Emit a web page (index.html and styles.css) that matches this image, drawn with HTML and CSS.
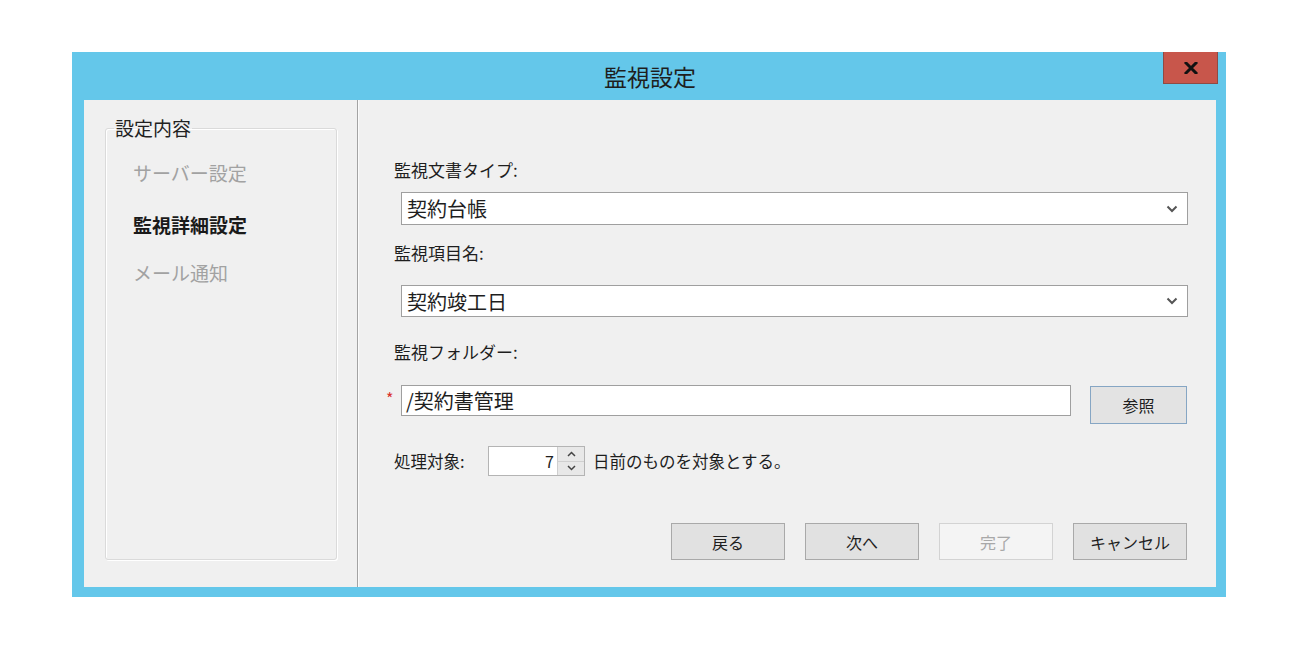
FILE: index.html
```html
<!DOCTYPE html>
<html lang="ja">
<head>
    <meta charset="UTF-8">
    <meta name="viewport" content="width=device-width, initial-scale=1.0">
    <title>監視設定</title>
    <link rel="stylesheet" href="styles.css">
</head>
<body>
    <div class="window">
        <div class="titlebar">
            <span></span>
            <span class="title">監視設定</span>
            <button class="close-btn" type="button">
                <svg width="14" height="12" viewBox="0 0 14 12">
                    <path d="M2 1 L12 11 M12 1 L2 11" stroke="#111" stroke-width="3" stroke-linecap="square"/>
                </svg>
            </button>
        </div>
        <div class="client">
            <div class="side">
                <fieldset class="group">
                    <legend>設定内容</legend>
                    <div class="step disabled">サーバー設定</div>
                    <div class="step current">監視詳細設定</div>
                    <div class="step disabled last">メール通知</div>
                </fieldset>
            </div>
            <div class="main">
                <div class="label first">監視文書タイプ:</div>
                <div class="field-row">
                    <span class="gutter"></span>
                    <div class="combo tall">
                        <span>契約台帳</span>
                        <svg class="chevron" width="12" height="8" viewBox="0 0 12 8">
                            <path d="M1.5 1.5 L6 6 L10.5 1.5" fill="none" stroke="#555" stroke-width="2"/>
                        </svg>
                    </div>
                </div>

                <div class="label second">監視項目名:</div>
                <div class="field-row gap-20">
                    <span class="gutter"></span>
                    <div class="combo">
                        <span>契約竣工日</span>
                        <svg class="chevron" width="12" height="8" viewBox="0 0 12 8">
                            <path d="M1.5 1.5 L6 6 L10.5 1.5" fill="none" stroke="#555" stroke-width="2"/>
                        </svg>
                    </div>
                </div>

                <div class="label third">監視フォルダー:</div>
                <div class="field-row folder-row">
                    <span class="gutter"><span class="required">*</span></span>
                    <div class="textbox">/契約書管理</div>
                    <button class="btn browse" type="button">参照</button>
                </div>

                <div class="target-row">
                    <span class="target-label">処理対象:</span>
                    <div class="spinner">
                        <span class="spin-value">7</span>
                        <div class="spin-buttons">
                            <span class="spin-up">
                                <svg width="9" height="6" viewBox="0 0 9 6"><path d="M1 5 L4.5 1.5 L8 5" fill="none" stroke="#444" stroke-width="1.5"/></svg>
                            </span>
                            <span class="spin-down">
                                <svg width="9" height="6" viewBox="0 0 9 6"><path d="M1 1 L4.5 4.5 L8 1" fill="none" stroke="#444" stroke-width="1.5"/></svg>
                            </span>
                        </div>
                    </div>
                    <span class="target-text">日前のものを対象とする。</span>
                </div>

                <div class="actions">
                    <button class="btn" type="button">戻る</button>
                    <button class="btn" type="button">次へ</button>
                    <button class="btn" type="button" disabled>完了</button>
                    <button class="btn" type="button">キャンセル</button>
                </div>
            </div>
        </div>
    </div>
</body>
</html>
```

FILE: styles.css
```css
body {
    margin: 0;
    padding: 52px 0 0 72px;
    background-color: #fff;
    font-family: "Noto Sans CJK JP", "Noto Sans", sans-serif;
    color: #1e1e1e;
}

.window {
    width: 1154px;
    height: 545px;
    box-sizing: border-box;
    background-color: #64c7ea;
    padding: 0 10px 10px 12px;
    display: flex;
    flex-direction: column;
}

.titlebar {
    height: 48px;
    flex-shrink: 0;
    display: grid;
    grid-template-columns: 1fr auto 1fr;
    align-items: center;
    margin-right: -2px;
}

.title {
    font-size: 23px;
    color: #1e1e1e;
    margin-left: -2px;
}

.close-btn {
    justify-self: end;
    align-self: start;
    width: 55px;
    height: 32px;
    border: 1px solid #8f4a44;
    border-top: none;
    background-color: #c8564b;
    padding: 0;
    display: flex;
    align-items: center;
    justify-content: center;
}

.client {
    flex: 1;
    display: flex;
    background-color: #f0f0f0;
}

.side {
    width: 273px;
    flex-shrink: 0;
    border-right: 1px solid #a3a3a3;
    box-shadow: 1px 0 0 #fbfbfb;
}

.group {
    margin: 17px 0 0 21px;
    width: 232px;
    height: 443px;
    box-sizing: border-box;
    padding: 0 0 0 8px;
    border: 1px solid #dadada;
    border-radius: 3px;
    box-shadow: inset 1px 1px 0 #fff, 1px 1px 0 #fff;
}

.group legend {
    font-size: 19px;
    line-height: 22px;
    padding: 0 1px;
    color: #222;
}

.step {
    font-size: 19px;
    line-height: 24px;
    margin-left: 19px;
    margin-top: 28px;
}

.step:first-of-type {
    margin-top: 22px;
}

.step.last {
    margin-top: 24px;
}

.step.disabled {
    color: #a2a2a2;
}

.step.current {
    font-weight: bold;
    color: #1a1a1a;
}

.main {
    flex: 1;
    padding: 58px 29px 0 26px;
    display: flex;
    flex-direction: column;
}

.label {
    font-size: 17px;
    line-height: 24px;
    margin-left: 10px;
}

.label.second {
    margin-top: 16px;
}

.label.third {
    margin-top: 23px;
}

.field-row {
    display: flex;
    margin-top: 10px;
}

.field-row.gap-20 {
    margin-top: 20px;
}

.gutter {
    width: 17px;
    flex-shrink: 0;
    display: flex;
    justify-content: flex-start;
    padding-left: 2px;
    box-sizing: border-box;
}

.required {
    color: #d9302c;
    font-size: 16px;
    line-height: 26px;
}

.combo {
    flex: 1;
    height: 32px;
    box-sizing: border-box;
    background-color: #fff;
    border: 1px solid #9f9f9f;
    display: flex;
    align-items: center;
    justify-content: space-between;
    padding: 0 9px 0 5px;
    font-size: 20px;
    margin-right: -1px;
}

.combo.tall {
    height: 33px;
}

.folder-row {
    margin-top: 21px;
    align-items: flex-start;
}

.textbox {
    flex: 1;
    height: 31px;
    box-sizing: border-box;
    background-color: #fff;
    border: 1px solid #9f9f9f;
    padding: 0 4px;
    font-size: 20px;
    line-height: 29px;
}

.btn {
    font-family: "Noto Sans CJK JP", "Noto Sans", sans-serif;
    font-size: 16px;
    color: #1e1e1e;
    background-color: #e1e1e1;
    border: 1px solid #a9a9a9;
    padding: 0;
    width: 114px;
    height: 37px;
}

.btn:disabled {
    color: #a8a8a8;
    background-color: #f4f4f4;
    border-color: #d3d3d3;
}

.btn.browse {
    width: 97px;
    height: 38px;
    margin-left: 19px;
    margin-top: 1px;
    border-color: #86a6c4;
    background-color: #e3e3e3;
}

.target-row {
    display: flex;
    align-items: center;
    margin-top: 22px;
    margin-left: 10px;
    font-size: 16.5px;
}

.target-label {
    width: 94px;
}

.spinner {
    width: 97px;
    height: 30px;
    box-sizing: border-box;
    background-color: #fff;
    border: 1px solid #b4b4b4;
    display: flex;
}

.spin-value {
    flex: 1;
    text-align: right;
    padding-right: 3px;
    font-size: 16px;
    line-height: 28px;
}

.spin-buttons {
    width: 26px;
    display: flex;
    flex-direction: column;
    background-color: #e8e8e8;
    border-left: 1px solid #cfcfcf;
}

.spin-up,
.spin-down {
    flex: 1;
    display: flex;
    align-items: center;
    justify-content: center;
}

.spin-up {
    border-bottom: 1px solid #d0d0d0;
}

.target-text {
    margin-left: 8px;
}

.actions {
    display: flex;
    justify-content: flex-end;
    gap: 20px;
    margin-top: 47px;
}
```
